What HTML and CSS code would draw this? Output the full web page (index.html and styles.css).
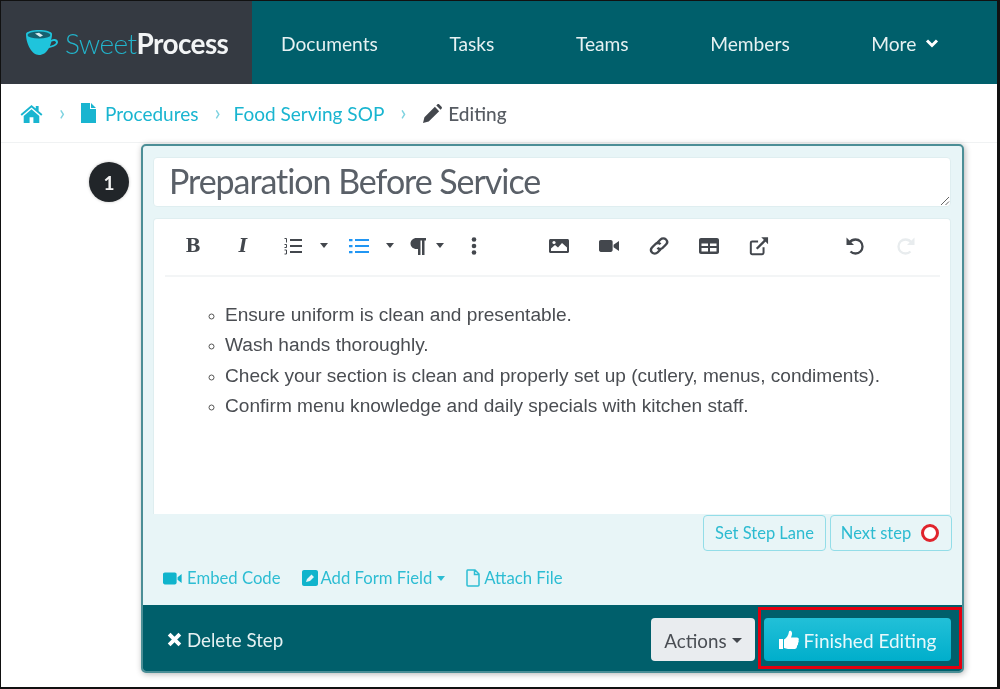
FILE: index.html
```html
<!DOCTYPE html>
<html lang="en">
<head>
<meta charset="utf-8">
<title>SweetProcess - Editing</title>
<link rel="stylesheet" href="styles.css">
</head>
<body>
<div class="frame">
  <header class="topbar">
    <div class="brand">
      <svg class="cup" viewBox="0 0 34 26"><path d="M1 4C1 1.500 8 0 14 0S27 1.500 27 4C27 6 26.800 8 26 10C29 8 33 9 33 12C33 15 29 17 24 18C21 23 18 25 14 25C7 25 1 14 1 4Z" fill="#1fc4dc"/><path d="M26.500 11.500C28.500 10.500 31 10.800 31 12.500C31 14 28 15.200 25 16Z" fill="#353a42"/><ellipse cx="14" cy="5" rx="11.500" ry="3.600" fill="#17606f"/><path d="M10 3.500L14 2.800L18 5.500L15 7Z" fill="#d9eef2"/></svg>
      <span class="brand-name"><span class="brand-sweet">Sweet</span><span class="brand-process">Process</span></span>
    </div>
    <nav class="nav">
      <a class="nav-item nav-first">Documents</a>
      <a class="nav-item">Tasks</a>
      <a class="nav-item">Teams</a>
      <a class="nav-item">Members</a>
      <a class="nav-item">More <svg class="nav-chev" viewBox="0 0 14 10"><path d="M2 2.500L7 7.500L12 2.500" fill="none" stroke="#fff" stroke-width="3"/></svg></a>
    </nav>
  </header>

  <div class="crumbs">
    <svg class="crumb-home" viewBox="0 0 24 20"><path d="M12 1L0.500 10.800L1.800 12.300L12 3.700L22.200 12.300L23.500 10.800L19.500 7.400V2H16.500V4.800Z" fill="#19b5d0"/><path d="M12 5.500L3.800 12.500V20H10V14H14V20H20.200V12.500Z" fill="#19b5d0"/></svg>
    <span class="crumb-sep">›</span>
    <svg class="crumb-doc" viewBox="0 0 15 20"><path d="M0 0H9V6H15V20H0Z M10 0L15 5H10Z" fill="#19b5d0"/></svg>
    <a class="crumb-link">Procedures</a>
    <span class="crumb-sep">›</span>
    <a class="crumb-link">Food Serving SOP</a>
    <span class="crumb-sep">›</span>
    <svg class="crumb-pen" viewBox="0 0 20 20"><path d="M0 20L1.500 14L12.500 3L17 7.500L6 18.500Z M14 1.500L15 0.500C15.700 -0.100 16.500 -0.100 17.200 0.500L19.500 2.800C20.100 3.500 20.100 4.300 19.500 5L18.500 6Z" fill="#43474d"/></svg>
    <span class="crumb-current">Editing</span>
  </div>

  <main class="workspace">
    <div class="step-num">1</div>
    <section class="card">
      <div class="card-body">
        <div class="title-box">
          <span class="title-text">Preparation Before Service</span>
          <svg class="resize" viewBox="0 0 10 10"><path d="M1 9L9 1M5.500 9L9 5.500" stroke="#666" stroke-width="1" fill="none"/></svg>
        </div>

        <div class="editor">
          <div class="toolbar">
            <span class="tb tb-glyph tb-bold">B</span>
            <span class="tb tb-glyph tb-italic">I</span>
            <span class="tb"><svg class="ico" viewBox="0 0 20 20"><path d="M7 4H19M7 10H19M7 16H19" stroke="#43474d" stroke-width="2.200"/><path d="M1.500 2.500H3.500V6.500M1.500 8.500H3.500V11.500H1.500M1.500 14H3.500V18H1.500" stroke="#43474d" stroke-width="1" fill="none"/></svg></span>
            <span class="caret-cell"><span class="caret"></span></span>
            <span class="tb tb-ul"><svg class="ico" viewBox="0 0 20 20"><path d="M6 4H20M6 10H20M6 16H20" stroke="#2196f3" stroke-width="2.200"/><path d="M0 3H3.500V5.200H0ZM0 9H3.500V11.200H0ZM0 15H3.500V17.200H0Z" fill="#2196f3"/></svg></span>
            <span class="caret-cell"><span class="caret"></span></span>
            <span class="tb tb-para"><svg class="ico" viewBox="0 0 20 20"><path d="M17 2H7.500C4 2 1.500 4.500 1.500 7.500S4 13 7.500 13H9V19H11.500V4.500H13V19H15.500V4.500H17Z" fill="#43474d"/></svg></span>
            <span class="caret-cell caret-para"><span class="caret"></span></span>
            <span class="tb tb-more"><svg class="ico" viewBox="0 0 20 20"><circle cx="10" cy="3.500" r="2.300" fill="#43474d"/><circle cx="10" cy="10" r="2.300" fill="#43474d"/><circle cx="10" cy="16.500" r="2.300" fill="#43474d"/></svg></span>
            <span class="tb tb-image"><svg class="ico" viewBox="0 0 20 20"><path d="M1.500 3H18.500C19.300 3 20 3.700 20 4.500V15.500C20 16.300 19.300 17 18.500 17H1.500C0.700 17 0 16.300 0 15.500V4.500C0 3.700 0.700 3 1.500 3Z" fill="#43474d"/><path d="M2 15V12.500L6 9L9 11.500L13 7L18 11.500V15Z" fill="#fff"/><circle cx="5" cy="6.500" r="1.600" fill="#fff"/></svg></span>
            <span class="tb"><svg class="ico" viewBox="0 0 22 20"><path d="M2 3.500H13C14.100 3.500 15 4.400 15 5.500V14.500C15 15.600 14.100 16.500 13 16.500H2C0.900 16.500 0 15.600 0 14.500V5.500C0 4.400 0.900 3.500 2 3.500ZM16 8.500L22 4.500V15.500L16 11.500Z" fill="#43474d"/></svg></span>
            <span class="tb"><svg class="ico" viewBox="0 0 20 20"><g fill="none" stroke="#43474d" stroke-width="2.400"><path d="M8.500 6.500L11.500 3.500C13 2 15.500 2 17 3.500S18.500 7 17 8.500L13.500 12C12 13.500 9.700 13.300 8.500 11.800"/><path d="M11.500 13.500L8.500 16.500C7 18 4.500 18 3 16.500S1.500 13 3 11.500L6.500 8C8 6.500 10.300 6.700 11.500 8.200"/></g></svg></span>
            <span class="tb"><svg class="ico" viewBox="0 0 20 20"><path d="M2 2H18C19.100 2 20 2.900 20 4V16C20 17.100 19.100 18 18 18H2C0.900 18 0 17.100 0 16V4C0 2.900 0.900 2 2 2ZM2.500 7.500V10H9V7.500ZM11 7.500V10H17.500V7.500ZM2.500 12V15.500H9V12ZM11 12V15.500H17.500V12Z" fill="#43474d" fill-rule="evenodd"/></svg></span>
            <span class="tb"><svg class="ico" viewBox="0 0 22 22"><path d="M16 12.500V18.500C16 19.300 15.300 20 14.500 20H3.500C2.700 20 2 19.300 2 18.500V7.500C2 6.700 2.700 6 3.500 6H10" fill="none" stroke="#43474d" stroke-width="2.200"/><path d="M8.500 14L18 4.500" stroke="#43474d" stroke-width="2.600"/><path d="M13.500 1.500H21V9Z" fill="#43474d"/></svg></span>
            <span class="tb tb-undo"><svg class="ico" viewBox="0 0 20 20"><path d="M4.500 6.500C6 4.500 8 3.500 10.500 3.500C14.500 3.500 17.500 6.500 17.500 10.500S14.500 17.500 10.500 17.500C8.500 17.500 6.800 16.800 5.500 15.500" fill="none" stroke="#43474d" stroke-width="2.300"/><path d="M1.500 1.500V9H9Z" fill="#43474d"/></svg></span>
            <span class="tb"><svg class="ico" viewBox="0 0 20 20"><path d="M15.500 6.500C14 4.500 12 3.500 9.500 3.500C5.500 3.500 2.500 6.500 2.500 10.500S5.500 17.500 9.500 17.500C11.500 17.500 13.200 16.800 14.500 15.500" fill="none" stroke="#e8ecee" stroke-width="2.300"/><path d="M18.500 1.500V9H11Z" fill="#e8ecee"/></svg></span>
          </div>
          <ul class="bullets">
            <li>Ensure uniform is clean and presentable.</li>
            <li>Wash hands thoroughly.</li>
            <li>Check your section is clean and properly set up (cutlery, menus, condiments).</li>
            <li>Confirm menu knowledge and daily specials with kitchen staff.</li>
          </ul>
        </div>

        <div class="step-actions">
          <button class="outline-btn btn-lane">Set Step Lane</button>
          <button class="outline-btn btn-next">Next step <span class="ring"></span></button>
        </div>

        <div class="links">
          <a class="link link-embed"><svg class="ico-video" viewBox="0 0 22 16"><path d="M2 1.500H13C14.100 1.500 15 2.400 15 3.500V12.500C15 13.600 14.100 14.500 13 14.500H2C0.900 14.500 0 13.600 0 12.500V3.500C0 2.400 0.900 1.500 2 1.500ZM16 6.500L20.500 3V13L16 9.500Z" fill="#10b4cc"/></svg>Embed Code</a>
          <a class="link link-form"><svg class="ico-form" viewBox="0 0 16 16"><path d="M2 0H14C15.100 0 16 0.900 16 2V14C16 15.100 15.100 16 14 16H2C0.900 16 0 15.100 0 14V2C0 0.900 0.900 0 2 0ZM4 12L8 11L12 7L9.500 4.500L5 9Z" fill="#10b4cc" fill-rule="evenodd"/></svg>Add Form Field<span class="link-caret"></span></a>
          <a class="link link-file"><svg class="ico-file" viewBox="0 0 14 18"><path d="M1.500 1H9L13 5V16C13 16.500 12.500 17 12 17H2C1.500 17 1 16.500 1 16V2C1 1.500 1 1 1.500 1ZM8.500 1.500V5.500H12.500" fill="none" stroke="#2dbdd3" stroke-width="1.500"/></svg>Attach File</a>
        </div>
      </div>

      <footer class="card-foot">
        <a class="delete"><svg class="ico-x" viewBox="0 0 14 14"><path d="M2 2L12 12M12 2L2 12" stroke="#fff" stroke-width="3.600"/></svg>Delete Step</a>
        <div class="foot-right">
          <button class="btn-actions">Actions<span class="actions-caret"></span></button>
          <button class="btn-finish"><svg class="ico-thumb" viewBox="0 0 20 20"><path d="M0 9H4V19H0Z" fill="#fff"/><path d="M5 9.500C7.500 8 9.500 5.500 10 1.500C10 0.500 12.800 0.300 13 3C13.200 5 12.300 6.500 12 7.500H18C19.500 7.500 20.300 9 19.500 10.200C20 11.300 19.700 12.300 19 13C19.300 14.200 18.900 15.200 18 15.800C18.200 17.500 17.200 19 15.500 19H9C7.500 19 6.500 18 5 18Z" fill="#fff"/></svg>Finished Editing</button>
        </div>
      </footer>
    </section>
  </main>
</div>
</body>
</html>
```

FILE: styles.css
```css
* { box-sizing: border-box; }
html, body { margin: 0; padding: 0; background: #111; }
.frame {
  width: 1000px;
  height: 689px;
  overflow: hidden;
  background: #fff;
  border-style: solid;
  border-color: #111;
  border-width: 1px 3px 2px 1px;
  font-family: Lato, "Open Sans", sans-serif;
  filter: blur(0.6px);
}
a { text-decoration: none; }

.topbar { display: flex; height: 83px; }
.brand {
  width: 251px;
  background: #353a42;
  display: flex;
  align-items: center;
  padding: 0 0 0 24px;
}
.cup { width: 34px; height: 26px; margin-right: 6px; }
.brand-name { font-size: 28px; letter-spacing: -0.6px; line-height: 1; }
.brand-sweet { color: #22b4cb; font-weight: 300; }
.brand-process { color: #f2f4f5; font-weight: 700; }
.nav {
  flex: 1;
  background: #005f6b;
  display: flex;
  align-items: center;
  padding-left: 29px;
  padding-top: 1px;
  gap: 81.500px;
}
.nav-item { color: #e6f1f2; font-size: 19.200px; display: inline-flex; align-items: center; gap: 9px; }
.nav-first { margin-right: -10px; }
.nav-chev { width: 14px; height: 10px; }

.crumbs {
  height: 59px;
  display: flex;
  align-items: center;
  padding-left: 19px;
  border-bottom: 1px solid #f0f2f3;
  font-size: 19px;
}
.crumb-home { width: 23px; height: 19px; }
.crumb-sep { color: #7fd3e0; font-size: 22px; margin: -3px 13px 0 16px; width: 6px; line-height: 1; }
.crumb-doc { width: 15px; height: 20px; margin-right: 9px; margin-left: 3px; }
.crumb-link { color: #19b5d0; }
.crumb-pen { width: 19px; height: 19px; margin-right: 6px; margin-left: 4px; }
.crumb-current { color: #565b62; font-weight: 500; }

.workspace { display: flex; align-items: flex-start; padding-left: 88px; padding-top: 1px; }
.step-num {
  width: 40px;
  height: 40px;
  margin-top: 18px;
  margin-right: 12px;
  border-radius: 50%;
  background: #212529;
  color: #f4f4f4;
  font-size: 19px;
  font-weight: 700;
  display: flex;
  align-items: center;
  justify-content: center;
  box-shadow: 0 0 3px rgba(0,0,0,.25);
}

.card {
  width: 823px;
  height: 529px;
  display: flex;
  flex-direction: column;
  border: 2px solid #4b8e96;
  border-radius: 5px;
  background: #e8f5f7;
  box-shadow: 1px 1px 6px rgba(0,0,0,.3);
  overflow: hidden;
}
.card-body { flex: 1; padding: 11px 11px 0 10px; }

.title-box {
  height: 50px;
  background: #fff;
  border: 1px solid #dfeef0;
  border-radius: 4px;
  display: flex;
  align-items: center;
  padding: 0 0 4px 15px;
  position: relative;
}
.title-text { color: #5a6068; font-size: 34px; letter-spacing: -1.05px; }
.resize { position: absolute; right: 0; bottom: 0; width: 10px; height: 10px; }

.editor {
  height: 296px;
  margin-top: 11px;
  background: #fff;
  border: 1px solid #dfeef0;
  border-bottom: 0;
  border-radius: 4px 4px 0 0;
  padding: 0 10px 0 11px;
}
.toolbar {
  height: 58px;
  display: flex;
  align-items: center;
  border-bottom: 2px solid #f3f5f6;
  padding: 0 0 3px 3px;
}
.tb { width: 50px; height: 24px; display: flex; align-items: center; justify-content: center; flex: none; }
.ico { width: 20px; height: 20px; }
.tb-glyph { font-family: "DejaVu Serif", "Liberation Serif", serif; font-weight: 700; color: #43474d; font-size: 18px; }
.tb-italic { font-style: italic; }
.caret-cell { width: 12px; display: flex; justify-content: center; flex: none; }
.caret { border-style: solid; border-color: #43474d transparent transparent; border-width: 5px 4.500px 0; }
.tb-ul { margin-left: 4px; }
.tb-para { width: 24px; margin-left: 11px; }
.caret-para { margin-left: 3px; }
.tb-more { margin-left: 3px; }
.tb-image { margin-left: 35px; }
.tb-undo { margin-left: 46px; margin-right: 1px; }

.bullets {
  list-style: circle;
  margin: 23px 0 0;
  padding-left: 60px;
  color: #4a4d52;
  font-family: "Liberation Sans", Arial, sans-serif;
  font-size: 19.080px;
  line-height: 30.400px;
}
.bullets li::marker { color: #555; font-size: 15px; }

.step-actions { display: flex; justify-content: flex-end; gap: 4px; margin-top: 1px; margin-right: -1px; }
.outline-btn {
  height: 36px;
  background: #e8f5f7;
  border: 1.500px solid #93dde8;
  border-radius: 4px;
  color: #2cbbd1;
  font-family: Lato, sans-serif;
  font-size: 16.500px;
  padding: 0;
  display: inline-flex;
  align-items: center;
  justify-content: center;
}
.btn-lane { width: 123px; }
.btn-next { width: 122px; gap: 10px; padding-right: 2px; }
.ring { width: 18px; height: 18px; border: 3px solid #e0242c; border-radius: 50%; background: #fff; }

.links { display: flex; align-items: center; margin-top: 16px; padding-left: 10px; height: 22px; font-size: 16.700px; color: #2dbdd3; }
.link { display: inline-flex; align-items: center; color: #2dbdd3; }
.ico-video { width: 20px; height: 15px; margin-right: 4px; }
.ico-form { width: 16px; height: 16px; margin-right: 3px; }
.ico-file { width: 14px; height: 18px; margin-right: 4px; }
.link-form { margin-left: 21px; }
.link-file { margin-left: 21px; }
.link-caret { margin-left: 5px; border-style: solid; border-color: #2dbdd3 transparent transparent; border-width: 5px 4.500px 0; }

.card-foot {
  height: 66px;
  background: #005f6b;
  display: flex;
  align-items: center;
  justify-content: space-between;
  padding: 3px 11px 0 24px;
  flex: none;
}
.delete { display: inline-flex; align-items: center; color: #e6f1f2; font-size: 18.700px; }
.ico-x { width: 15px; height: 15px; margin-right: 5px; }
.foot-right { display: flex; gap: 9px; }
.btn-actions {
  width: 104px;
  height: 43px;
  background: #e9ecef;
  border: 0;
  border-radius: 4px;
  color: #4a4e54;
  font-family: Lato, sans-serif;
  font-size: 18.800px;
  padding: 1px 0 0;
  display: inline-flex;
  align-items: center;
  justify-content: center;
}
.actions-caret { margin-left: 5px; border-style: solid; border-color: #43474d transparent transparent; border-width: 5px 5px 0; }
.btn-finish {
  width: 187px;
  height: 43px;
  background: linear-gradient(#22c0d8, #00aecb);
  border: 0;
  border-radius: 4px;
  color: #e8f8fb;
  font-family: Lato, sans-serif;
  font-size: 19px;
  padding: 1px 0 0;
  display: inline-flex;
  align-items: center;
  justify-content: center;
  position: relative;
}
.btn-finish::after {
  content: "";
  position: absolute;
  top: -11px;
  bottom: -8px;
  left: -6px;
  right: -11px;
  border: 3px solid #e3000f;
}
.ico-thumb { width: 20px; height: 20px; margin-right: 5px; }
```
